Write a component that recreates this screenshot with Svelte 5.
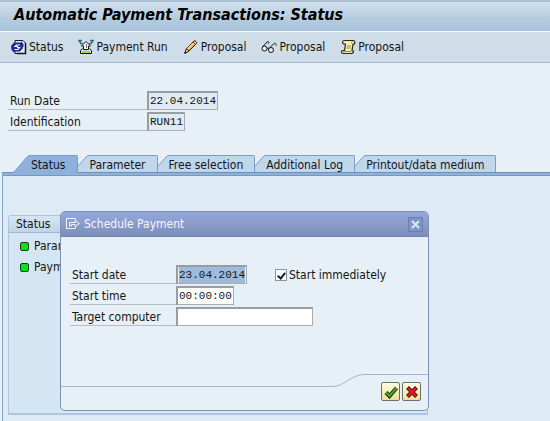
<script lang="ts">
  let runDate = '22.04.2014';
  let identification = 'RUN11';
  let startDate = '23.04.2014';
  let startTime = '00:00:00';
  let targetComputer = '';
  let startImmediately = true;

  const tools = [
    { icon: 'refresh', label: 'Status' },
    { icon: 'execute', label: 'Payment Run' },
    { icon: 'pencil', label: 'Proposal' },
    { icon: 'glasses', label: 'Proposal' },
    { icon: 'scroll', label: 'Proposal' }
  ];
  const tabs = ['Status', 'Parameter', 'Free selection', 'Additional Log', 'Printout/data medium'];
  let activeTab = 'Status';
</script>

<div class="window">
  <header><h1>Automatic Payment Transactions: Status</h1></header>

  <nav class="toolbar">
    {#each tools as tool}
      <button class="tool">
        <svg width="16" height="16" viewBox="0 0 16 16" aria-hidden="true">
          {#if tool.icon === 'refresh'}
            <path d="M4 1.500H12L14.500 4V14.500H4Z" fill="#e4edf6" stroke="#18182c" />
            <path d="M14.500 4V14.500H6" fill="none" stroke="#111" stroke-width="1.500" />
            <path d="M0 7L3 3.500H10V2L12.500 5V8H11.500L12 9L9 12.500H3.500V14L0.500 11Z" fill="#1c2c96" />
            <path d="M9 6H5.500L4 7.500H7M3.500 10.500H7L8.500 8.500H6" fill="none" stroke="#fff" stroke-width="1.200" />
          {:else if tool.icon === 'execute'}
            <path d="M0 1.500H4M2 4.500H5M12 1.500H16M11 4.500H14" stroke="#2b6f92" stroke-width="1.500" />
            <path d="M1 3H3M13 3H15" stroke="#111" />
            <path d="M8 2.500L12.500 7H10.500V10.500H5.500V7H3.500Z" fill="#fff" stroke="#111" />
            <path d="M7.500 5.500H8.500V9" fill="none" stroke="#777" />
            <path d="M4.500 9.500L2.500 11.500V14.500H13.500V11.500L11.500 9.500" fill="none" stroke="#111" />
            <path d="M4 12H12V14H4Z" fill="#a5dc24" />
          {:else if tool.icon === 'pencil'}
            <path d="M2 14L3.500 9.500L10.500 2.500C12 1 14.500 3.500 13 5L6 12Z" fill="#f3a62c" stroke="#332820" />
            <path d="M4.500 10L11 3.500" stroke="#ffe18c" stroke-width="1.500" />
            <path d="M10 3L11 2C12 1 14.500 3.500 13.500 4.500L12.500 5.500Z" fill="#f4c3bd" stroke="#53352e" />
            <path d="M2 14L3.500 9.500L6 12Z" fill="#fff1d0" stroke="#332820" />
            <path d="M1.500 14.500L3 13" stroke="#111" stroke-width="1.500" />
          {:else if tool.icon === 'glasses'}
            <path d="M1.500 8L6 3C7 2 8.500 3 7.500 4.500M9 8.500L12.500 5C14 3.500 15.500 4.500 15 6.500M6 9.500L8 9" fill="none" stroke="#111" />
            <circle cx="3.500" cy="9.500" r="2.500" fill="#e9f2f8" stroke="#111" />
            <circle cx="10" cy="11" r="2.500" fill="#e9f2f8" stroke="#111" />
          {:else}
            <path d="M4.500 1.500H13C15.500 1.500 15.500 5.500 13 5.500L12 11.500C14.500 11.500 13.500 14.500 11 14.500H3C1 14.500 1 11.500 3 11.500H4.500L5.500 5H4C2 5 2 1.500 4.500 1.500Z" fill="#f5edaa" stroke="#29271e" stroke-width="1.200" />
            <path d="M12.500 2.500C11 3 11.500 5 13 5M7 7H11M6.500 9H10.500M3 12.500H11" fill="none" stroke="#8d895d" />
          {/if}
        </svg>
        <span>{tool.label}</span>
      </button>
    {/each}
  </nav>

  <form class="fields run">
    <div class="field">
      <label for="run-date">Run Date</label>
      <input id="run-date" class="date" readonly bind:value={runDate} />
    </div>
    <div class="field">
      <label for="ident">Identification</label>
      <input id="ident" class="ident" readonly bind:value={identification} />
    </div>
  </form>

  <div class="tabs" role="tablist">
    {#each tabs as tab}
      <button
        class="tab"
        class:active={tab === activeTab}
        role="tab"
        aria-selected={tab === activeTab}
        on:click={() => (activeTab = tab)}
      >
        {#if tab === activeTab}
          <svg width="18" height="18" viewBox="0 0 18 18" aria-hidden="true">
            <path class="slope" d="M0 18V17L2 16L14 2Q15 0 18 0V18Z" />
            <path class="edge" d="M0 17.500L2 16L14 2Q15 0.500 18 0.500" />
          </svg>
        {:else}
          <svg width="11" height="18" viewBox="0 0 11 18" aria-hidden="true">
            <path class="slope" d="M0 18V11L9 1Q10 0 11 0V18Z" />
            <path class="edge" d="M0 11L8 2Q9 0.500 11 0.500" />
          </svg>
        {/if}
        <span>{tab}</span>
      </button>
    {/each}
  </div>

  <main>
    <section class="group">
      <h2>Status</h2>
      <ul>
        <li><i></i>Parameters</li>
        <li><i></i>Payment</li>
      </ul>

      <div class="dialog" role="dialog" aria-labelledby="dialog-title">
        <div class="caption">
          <svg width="15" height="12" viewBox="0 0 15 12" aria-hidden="true">
            <path d="M9.500 2V0.500H0.500V10.500H9.500V9" />
            <path d="M3.500 8V4.500H9V2.500L13.500 5.500L9 8.500V6.500H5.500V8Z" />
          </svg>
          <h3 id="dialog-title">Schedule Payment</h3>
          <button class="close" aria-label="Close">
            <svg width="9" height="9" viewBox="0 0 9 9"><path d="M1 1L8 8M8 1L1 8" /></svg>
          </button>
        </div>

        <form class="fields schedule">
          <div class="field">
            <label for="start-date">Start date</label>
            <input id="start-date" class="date selected" bind:value={startDate} />
            <span class="check">
              <input id="immediately" type="checkbox" bind:checked={startImmediately} />
              <label for="immediately">Start immediately</label>
            </span>
          </div>
          <div class="field">
            <label for="start-time">Start time</label>
            <input id="start-time" class="time" bind:value={startTime} />
          </div>
          <div class="field">
            <label for="target">Target computer</label>
            <input id="target" class="target" bind:value={targetComputer} />
          </div>
        </form>

        <footer>
          <div class="low"></div>
          <svg width="32" height="14" viewBox="0 0 32 14" aria-hidden="true">
            <path d="M0 12.500C11 12.500 18 0.500 32 0.500" />
          </svg>
          <div class="actions">
            <button aria-label="Continue">
              <svg width="14" height="14" viewBox="0 0 14 14">
                <path d="M2 7.500L5.500 11L12.500 3" stroke="#16230c" stroke-width="4" />
                <path d="M2 7.500L5.500 11L12.500 3" stroke="#4eaa20" stroke-width="2.200" />
              </svg>
            </button>
            <button aria-label="Cancel">
              <svg width="14" height="14" viewBox="0 0 14 14">
                <path d="M2.500 2.500L11.500 11.500M11.500 2.500L2.500 11.500" stroke="#3d0d0d" stroke-width="4" />
                <path d="M3 3L11 11M11 3L3 11" stroke="#f01825" stroke-width="2.400" />
              </svg>
            </button>
          </div>
        </footer>
      </div>
    </section>
  </main>
</div>

<style>
  :global(body) {
    margin: 0;
    background: #e8f0f7;
  }

  .window {
    display: flex;
    flex-direction: column;
    min-height: 100vh;
    overflow: hidden;
    font: 12px/16px "DejaVu Sans Condensed", "DejaVu Sans", sans-serif;
    color: #151515;
  }

  * {
    box-sizing: border-box;
  }

  h1, h2, h3, ul {
    margin: 0;
    padding: 0;
  }

  button, input {
    font: inherit;
    color: inherit;
  }

  button {
    padding: 0;
  }

  header {
    height: 32px;
    padding: 3px 14px 0;
    border-top: 2px solid #a9bfd2;
    border-bottom: 1px solid #f4f8fb;
    background: linear-gradient(#d3e1ef, #b4cbdc 60%, #a9c3e0);
  }

  h1 {
    font: italic bold 16px/20px "DejaVu Sans Condensed", "DejaVu Sans", sans-serif;
    white-space: nowrap;
    color: #000;
  }

  .toolbar {
    display: flex;
    gap: 15px;
    height: 31px;
    padding: 0 11px;
    background: #cfdde9;
    border-bottom: 1px solid #a3b9cd;
  }

  .tool {
    display: flex;
    align-items: center;
    gap: 2px;
    border: 0;
    background: none;
    white-space: nowrap;
  }

  .fields {
    display: flex;
    flex-direction: column;
    gap: 2px;
  }

  .run {
    padding: 28px 8px 24px;
  }

  .field {
    display: flex;
    align-items: flex-end;
    height: 19px;
  }

  .field > label {
    width: 139px;
    height: 18px;
    padding-left: 2px;
    border-bottom: 1px solid #b3bdc3;
    line-height: 18px;
  }

  .field > input {
    height: 19px;
    padding: 0 1px;
    border: 1px solid #a9adb0;
    border-top: 2px solid #999da1;
    border-left: 2px solid #999da1;
    border-radius: 0;
    background: #fff;
    font: 11px/14px "Liberation Mono", monospace;
    outline: 0;
  }

  .run .field > input {
    background: #dfeaf4;
  }

  .date {
    width: 71px;
  }

  .ident {
    width: 38px;
  }

  .time {
    width: 58px;
  }

  .target {
    width: 137px;
  }

  .field > .selected {
    background: linear-gradient(#9dbbdc, #9dbbdc) content-box #fff;
  }

  .tabs {
    display: flex;
    height: 17px;
    padding-left: 13px;
  }

  .tab {
    display: flex;
    border: 0;
    background: none;
    white-space: nowrap;
  }

  .tab svg {
    flex: none;
  }

  .tab span {
    height: 18px;
    padding-right: 11px;
    border-top: 1px solid #7d9cc2;
    border-right: 1px solid #7d9cc2;
    border-top-right-radius: 2px;
    background: #c0d6eb;
    line-height: 18px;
  }

  .slope {
    fill: #c0d6eb;
  }

  .edge {
    fill: none;
    stroke: #7d9cc2;
  }

  /* the active tab runs into the strip below it */
  .active {
    position: relative;
    z-index: 1;
  }

  .tab.active span {
    padding-right: 12px;
    background: #8db1db;
  }

  .active .slope {
    fill: #8db1db;
  }

  main {
    flex: 1;
    margin-left: 2px;
    padding: 42px 5px 6px;
    border-top: 1px solid #6f91b9;
    border-left: 1px solid #86a9ce;
    background: #deebf4;
    box-shadow: inset 0 2px #8fb1da, inset 0 3px #7598c0;
  }

  .group {
    position: relative;
    width: 420px;
    height: 200px;
    border: 1px solid #adc5df;
    border-bottom-width: 2px;
    border-radius: 3px 3px 0 0;
    background: #d4e6f4;
  }

  h2 {
    height: 17px;
    padding-left: 7px;
    border-bottom: 1px solid #9db9d6;
    background: linear-gradient(#d5e5f3, #bdd4e9);
    font: inherit;
  }

  ul {
    display: flex;
    flex-direction: column;
    gap: 5px;
    padding: 5px 11px;
    list-style: none;
  }

  li {
    display: flex;
    align-items: center;
    gap: 5px;
  }

  i {
    width: 9px;
    height: 9px;
    border: 1px solid #173d18;
    border-radius: 2px;
    background: #00e51c;
  }

  .dialog {
    position: absolute;
    top: -5px;
    left: 51px;
    display: flex;
    flex-direction: column;
    width: 369px;
    height: 200px;
    border: 1px solid #7e91b5;
    border-radius: 5px;
    background: #e8f0f7;
    overflow: hidden;
  }

  .caption {
    display: flex;
    align-items: center;
    gap: 3px;
    height: 25px;
    padding: 0 5px;
    background: linear-gradient(#92a7d9, #8b9ccb 50%, #7b8db9);
    border-bottom: 1px solid #7486ad;
    color: #f1f6ff;
  }

  .caption path {
    fill: none;
    stroke: #f1f6ff;
  }

  h3 {
    flex: 1;
    font: inherit;
  }

  .close {
    display: grid;
    place-items: center;
    width: 15px;
    height: 15px;
    border: 1px solid #6d80ae;
    background: #8195c4;
  }

  .close path {
    stroke: #d5e9ff;
    stroke-width: 2;
  }

  .schedule {
    padding: 28px 9px 0;
  }

  .schedule .field > label {
    width: 106px;
  }

  .check {
    display: flex;
    align-items: center;
    gap: 2px;
    height: 19px;
    margin-left: 28px;
  }

  .check input {
    display: grid;
    place-items: center;
    appearance: none;
    width: 12px;
    height: 12px;
    margin: 0;
    border: 1px solid #8c9298;
    background: #fff;
  }

  .check input:checked::before {
    content: "";
    width: 3px;
    height: 6px;
    border: solid #111c38;
    border-width: 0 2px 2px 0;
    transform: rotate(40deg);
  }

  footer {
    display: flex;
    height: 36px;
    margin-top: auto;
  }

  .low {
    flex: 1;
    height: 13px;
    border-bottom: 1px solid #9eb4cf;
  }

  footer > svg path {
    fill: none;
    stroke: #9eb4cf;
  }

  .actions {
    display: flex;
    gap: 2px;
    padding: 7px 7px 0 16px;
    border-top: 1px solid #9eb4cf;
  }

  .actions button {
    display: grid;
    place-items: center;
    width: 19px;
    height: 19px;
    border: 1px solid #70706a;
    border-radius: 2px;
    background: linear-gradient(#fffbe0, #f2df98);
  }

  .actions path {
    fill: none;
  }
</style>
